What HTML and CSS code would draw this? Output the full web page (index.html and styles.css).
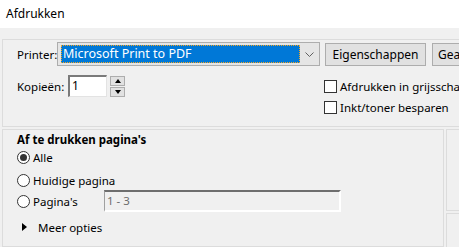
FILE: index.html
```html
<!DOCTYPE html>
<html lang="nl">
<head>
  <meta charset="UTF-8" />
  <title>Afdrukken</title>
  <link rel="stylesheet" href="styles.css">
</head>
<body>
  <div class="titlebar">Afdrukken</div>
  <div class="dialog">
    <div class="group printer-group">
      <div class="row">
        <span class="label printer-label">Printer:</span>
        <div class="combo">
          <span class="combo-value">Microsoft Print to PDF</span>
          <span class="combo-arrow">
            <svg width="9" height="5" viewBox="0 0 9 5"><path d="M0.5 0.5 L4.5 4.5 L8.5 0.5" fill="none" stroke="#606060" stroke-width="1"/></svg>
          </span>
        </div>
        <button class="btn btn-props">Eigenschappen</button>
        <button class="btn btn-more">Geavanceerd</button>
      </div>
      <div class="row row-copies">
        <div class="copies">
          <span class="label copies-label">Kopieën:</span>
          <div class="num-input">1</div>
          <div class="spin">
            <span class="spin-btn"><i class="tri-up"></i></span>
            <span class="spin-btn"><i class="tri-down"></i></span>
          </div>
        </div>
        <div class="checks">
          <label class="check"><span class="box"></span>Afdrukken in grijsschaal</label>
          <label class="check"><span class="box"></span>Inkt/toner besparen</label>
        </div>
      </div>
    </div>
    <div class="lower">
      <div class="group pages-group">
        <div class="group-title">Af te drukken pagina's</div>
        <label class="radio"><span class="circle checked"></span>Alle</label>
        <label class="radio"><span class="circle"></span>Huidige pagina</label>
        <div class="radio-row">
          <label class="radio radio-pages"><span class="circle"></span>Pagina's</label>
          <div class="range-input">1 - 3</div>
        </div>
        <div class="more"><i class="tri-right"></i>Meer opties</div>
      </div>
      <div class="side">
        <div class="group side-top"></div>
        <div class="group side-bottom"></div>
      </div>
    </div>
  </div>
</body>
</html>
```

FILE: styles.css
```css
body {
  margin: 0;
  width: 459px;
  height: 247px;
  overflow: hidden;
  background-color: #f0f0f0;
  font-family: 'Segoe UI', 'Noto Sans', sans-serif;
  font-size: 11.5px;
  color: #000;
}
.titlebar {
  height: 28px;
  background-color: #fff;
  padding-left: 6px;
  line-height: 27px;
  font-size: 12px;
}
.dialog {
  width: 600px;
  padding: 11px 0 0 2px;
}
.group {
  border: 1px solid #dcdcdc;
  box-sizing: border-box;
}
.printer-group {
  height: 88px;
  padding: 2px 0 0 14px;
}
.row {
  display: flex;
  align-items: center;
}
.label {
  white-space: nowrap;
}
.printer-label {
  width: 40px;
}
.combo {
  width: 263px;
  height: 24px;
  box-sizing: border-box;
  border: 1px solid #adadad;
  background-color: #e5e5e5;
  display: flex;
  align-items: center;
  padding: 2px 0 2px 3px;
}
.combo-value {
  flex: 1;
  height: 18px;
  line-height: 17px;
  box-sizing: border-box;
  background-color: #0078d7;
  color: #fff;
  padding-left: 2px;
  outline: 1px dotted #f5a623;
  outline-offset: -1px;
  font-size: 12.5px;
}
.combo-arrow {
  width: 19px;
  display: flex;
  justify-content: center;
}
.btn {
  height: 23px;
  margin-left: 5px;
  border: 1px solid #adadad;
  background-color: #e1e1e1;
  font: inherit;
  font-size: 12px;
  padding: 0;
  color: #000;
}
.btn-props {
  width: 101px;
}
.btn-more {
  width: 101px;
  margin-left: 6px;
  text-align: left;
  padding-left: 5px;
}
.row-copies {
  align-items: flex-start;
  margin-top: 9px;
}
.copies {
  width: 307px;
  display: flex;
  align-items: center;
}
.copies-label {
  width: 51px;
}
.num-input {
  width: 39px;
  height: 22px;
  box-sizing: border-box;
  background-color: #fff;
  border-style: solid;
  border-width: 2px 1px 1px 2px;
  border-color: #7a7a7a #e3e3e3 #e3e3e3 #7a7a7a;
  padding-left: 2px;
  line-height: 18px;
  font-size: 12px;
}
.spin {
  margin-left: 3px;
  display: flex;
  flex-direction: column;
  gap: 1px;
}
.spin-btn {
  width: 15px;
  height: 10px;
  box-sizing: border-box;
  border: 1px solid #adadad;
  background-color: #e1e1e1;
  display: flex;
  align-items: center;
  justify-content: center;
}
.tri-up, .tri-down {
  width: 0;
  height: 0;
  border-left: 3px solid transparent;
  border-right: 3px solid transparent;
}
.tri-up {
  border-bottom: 4px solid #000;
}
.tri-down {
  border-top: 4px solid #000;
}
.checks {
  padding-top: 5px;
  display: flex;
  flex-direction: column;
  gap: 8px;
}
.check {
  display: flex;
  align-items: center;
  height: 13px;
  white-space: nowrap;
}
.box {
  width: 13px;
  height: 13px;
  box-sizing: border-box;
  border: 1px solid #333;
  background-color: #fff;
  margin-right: 3px;
}
.lower {
  display: flex;
  margin-top: 2px;
}
.pages-group {
  width: 442px;
  height: 118px;
  padding: 0 0 0 14px;
}
.group-title {
  font-weight: bold;
  line-height: 17px;
  margin-top: 1px;
}
.radio {
  display: flex;
  align-items: center;
  height: 13px;
  margin-top: 3px;
  white-space: nowrap;
}
.radio + .radio {
  margin-top: 10px;
}
.circle {
  width: 13px;
  height: 13px;
  box-sizing: border-box;
  border: 1px solid #333;
  border-radius: 50%;
  background-color: #fff;
  margin-right: 3px;
  display: flex;
  align-items: center;
  justify-content: center;
}
.circle.checked::after {
  content: '';
  width: 7px;
  height: 7px;
  border-radius: 50%;
  background-color: #333;
}
.radio-row {
  display: flex;
  align-items: center;
  margin-top: 3px;
}
.radio-pages {
  width: 87px;
  margin-top: 0;
}
.range-input {
  width: 237px;
  height: 22px;
  box-sizing: border-box;
  border-style: solid;
  border-width: 2px 2px 2px 1px;
  border-color: #6e6e6e #fff #fff #a0a0a0;
  background-color: #f0f0f0;
  color: #6d6d6d;
  padding-left: 2px;
  line-height: 18px;
}
.more {
  display: flex;
  align-items: center;
  margin-top: 6px;
  padding-left: 5px;
  height: 18px;
}
.tri-right {
  width: 0;
  height: 0;
  border-top: 4px solid transparent;
  border-bottom: 4px solid transparent;
  border-left: 5px solid #000;
  margin-right: 11px;
}
.side {
  margin-left: 2px;
  display: flex;
  flex-direction: column;
  gap: 2px;
}
.side-top {
  width: 100px;
  height: 82px;
}
.side-bottom {
  width: 100px;
  height: 40px;
}
```
